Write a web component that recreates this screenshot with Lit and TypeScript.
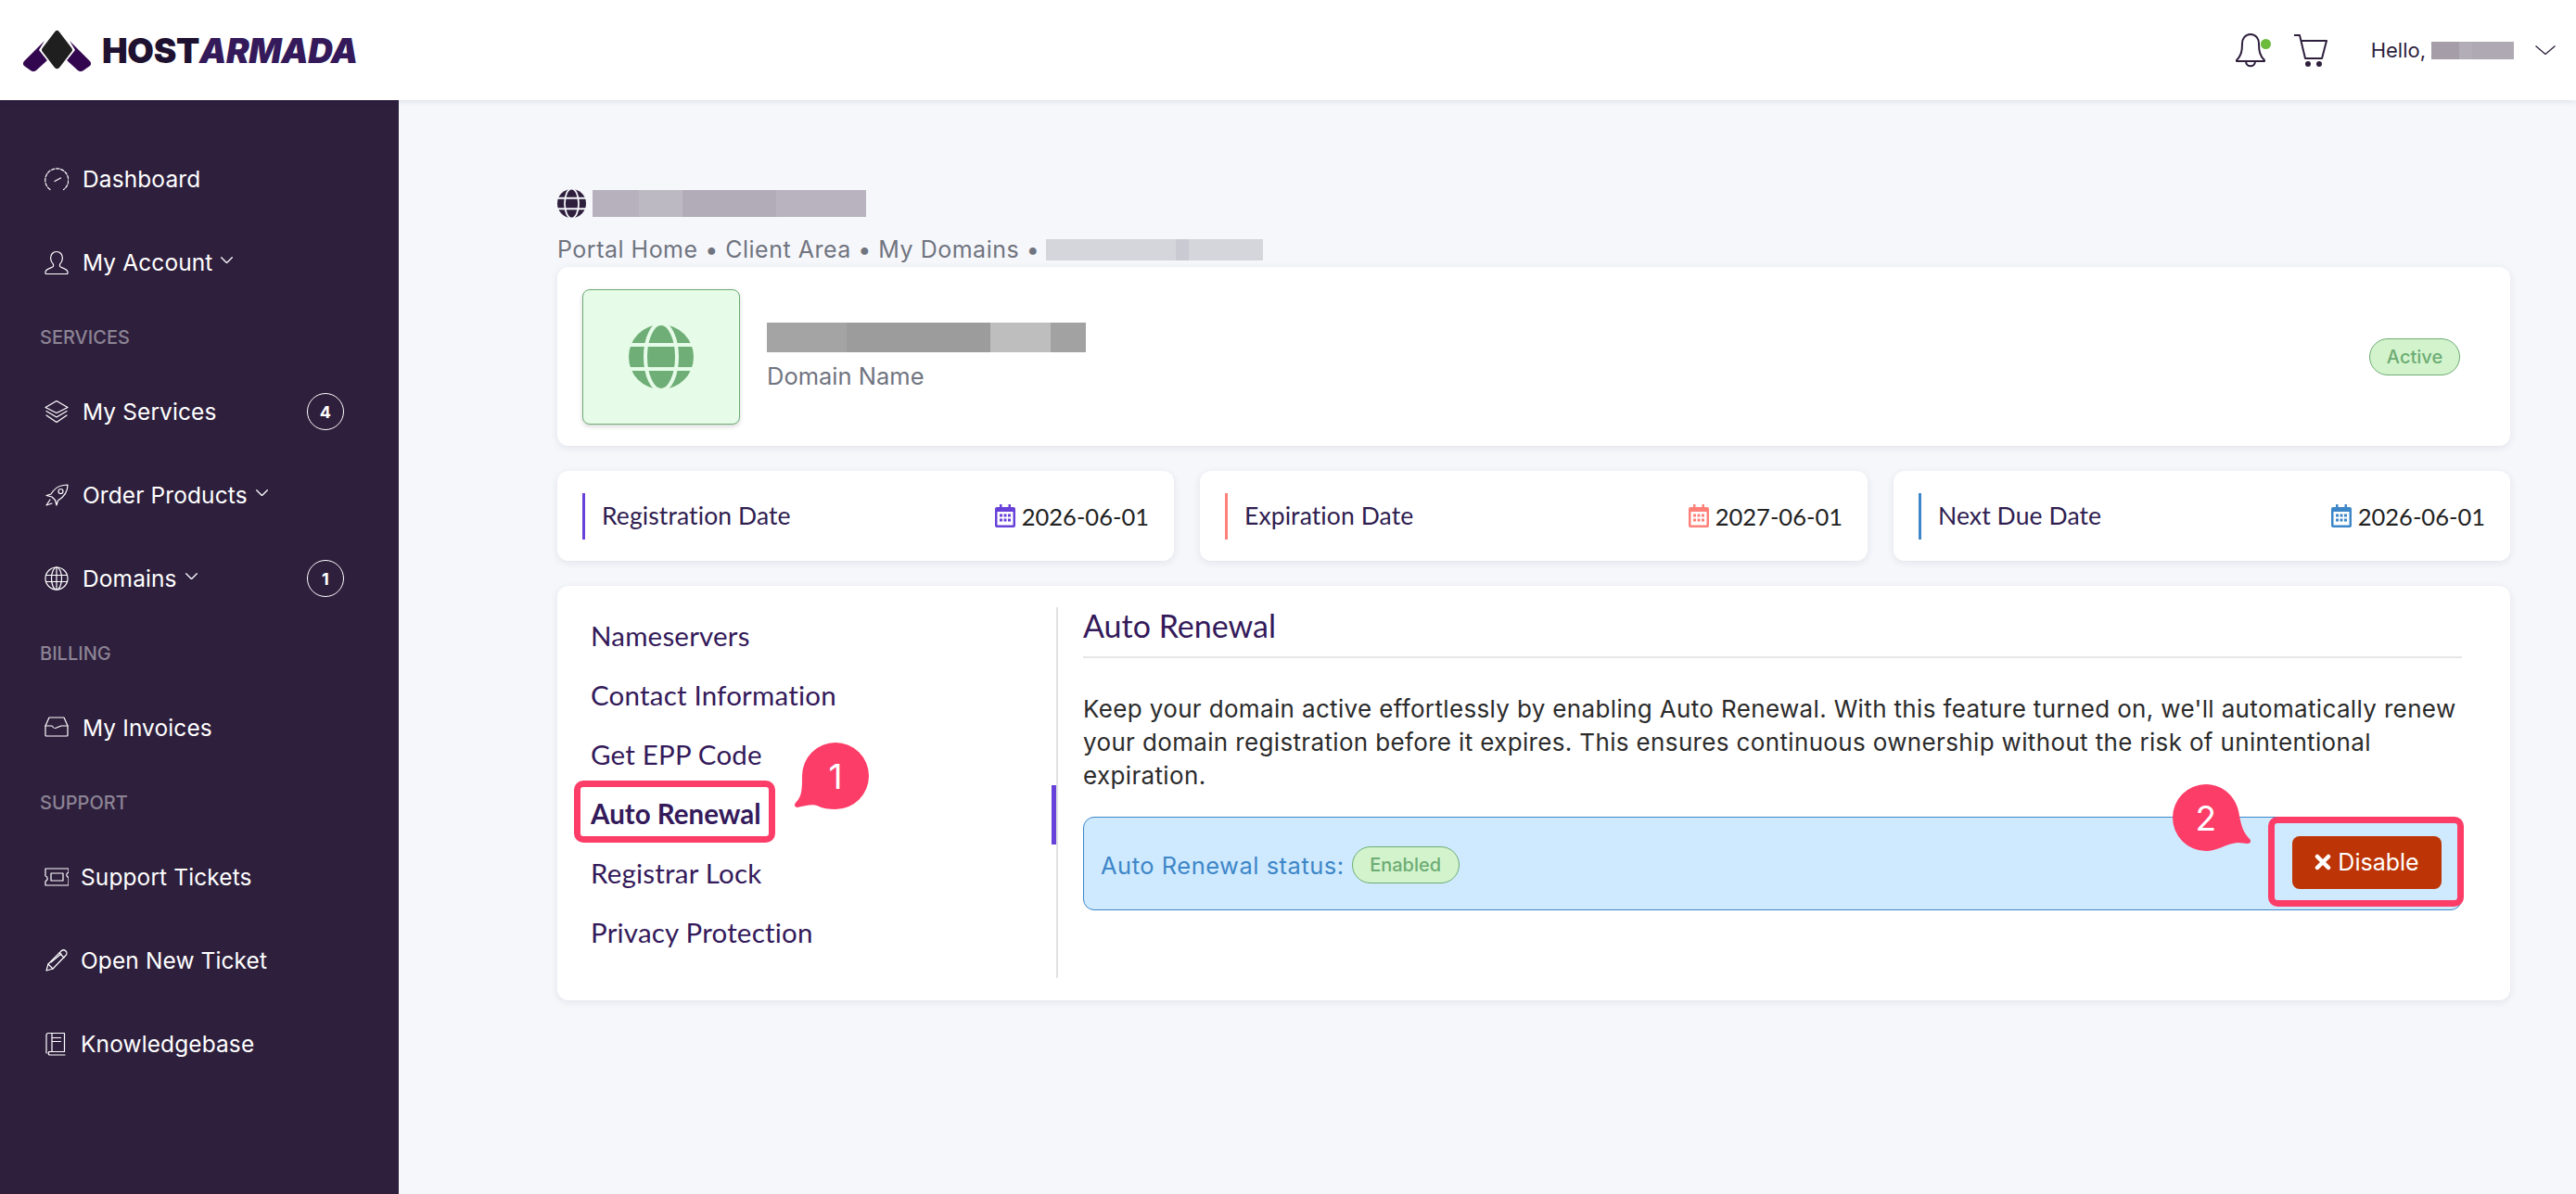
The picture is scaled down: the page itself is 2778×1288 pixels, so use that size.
import { LitElement, css, html, svg } from 'lit'
import { customElement } from 'lit/decorators.js'

const navIcons: Record<string, unknown> = {
  gauge: svg`<path d="M6 24.5a12.5 12.5 0 1 1 14.5 0" stroke-dasharray="3.5 1.6"/><path d="M11 15.5l6.5-3.5"/>`,
  user: svg`<path d="M13 1.500c-4 0-6.400 3-6.400 7 0 3 1.300 5 2.900 6.600v2.200c0 1.400-8.200 2.200-8.500 6v1.200c0 .6.400 1 1 1h22c.6 0 1-.4 1-1v-1.200c-.3-3.800-8.500-4.600-8.500-6v-2.200c1.600-1.600 2.900-3.600 2.900-6.600 0-4-2.400-7-6.400-7z"/>`,
  layers: svg`<path d="M13 1.500L25 8.500 13 14.500 1 8.500z"/><path d="M2 12.500L13 19 24 12.500"/><path d="M2 17L13 24.500 24 17"/>`,
  rocket: svg`<path d="M25 2c-7 0-12 2-15.500 6.500L7 12l-5 1.500 6 1.500 3.500 3.500 1.500 5.500 1.500-5c5-3 10.500-7.500 10.500-17z"/><circle cx="17.500" cy="9" r="2.500"/><path d="M6 18l-4 6 6-2"/>`,
  globe: svg`<circle cx="13" cy="13" r="12"/><ellipse cx="13" cy="13" rx="5.500" ry="12"/><path d="M13 1v24M1.500 9.500h23M1.500 16.500h23"/>`,
  inbox: svg`<path d="M5 2h16l4 9v10a1 1 0 0 1-1 1H2a1 1 0 0 1-1-1V11z"/><path d="M1 11h7c2 3 3 3 5 2s3-1 5-2h7"/>`,
  ticket: svg`<path d="M1 4h25v4c-3 1-3 4.500 0 5.500V22H1v-4.500c3-1 3-4.500 0-5.500z"/><path d="M7 9h13v8H7z"/>`,
  pencil: svg`<path d="M2 24l2-7L18 3c2-2 4-1 5 0s1.500 3 0 4.500L9 22z"/><path d="M4 17l5 5M16 5l5 5M7 15L18 6"/>`,
  book: svg`<path d="M4 1.500h17.500v20H5a2.500 2.500 0 0 0 0 3.500h17M4 1.500a2 2 0 0 0-2 2V23"/><path d="M9 6.500h8.500M9 10.500h8.500M8 2v19"/>`,
}

type NavItem = { label?: string; section?: string; icon?: string; caret?: boolean; count?: string; tight?: boolean }

const nav: NavItem[] = [
  { label: 'Dashboard', icon: 'gauge' },
  { label: 'My Account', icon: 'user', caret: true },
  { section: 'SERVICES' },
  { label: 'My Services', icon: 'layers', count: '4' },
  { label: 'Order Products', icon: 'rocket', caret: true },
  { label: 'Domains', icon: 'globe', caret: true, count: '1' },
  { section: 'BILLING' },
  { label: 'My Invoices', icon: 'inbox' },
  { section: 'SUPPORT' },
  { label: 'Support Tickets', icon: 'ticket', tight: true },
  { label: 'Open New Ticket', icon: 'pencil', tight: true },
  { label: 'Knowledgebase', icon: 'book', tight: true },
]

const dates = [
  { label: 'Registration Date', date: '2026-06-01', color: '#6741d9' },
  { label: 'Expiration Date', date: '2027-06-01', color: '#ff8078' },
  { label: 'Next Due Date', date: '2026-06-01', color: '#3d86c8' },
]

const tabs = ['Nameservers', 'Contact Information', 'Get EPP Code', 'Auto Renewal', 'Registrar Lock', 'Privacy Protection']

const solidGlobe = (size: number, color: string, gap: string) => html`
  <svg width=${size} height=${size} viewBox="0 0 70 70">
    <circle cx="35" cy="35" r="35" fill=${color}/>
    <ellipse cx="35" cy="35" rx="17" ry="36" fill="none" stroke=${gap} stroke-width="4"/>
    <path d="M0 22h70M0 48h70" stroke=${gap} stroke-width="4"/>
  </svg>`

const calendar = (color: string) => html`
  <svg class="cal" width="22" height="25" viewBox="0 0 22 25">
    <path d="M5 0h2.500v3h7V0H17v3h3a2 2 0 0 1 2 2v18a2 2 0 0 1-2 2H2a2 2 0 0 1-2-2V5a2 2 0 0 1 2-2h3z" fill=${color}/>
    <rect x="2.500" y="8" width="17" height="14.500" fill="#fff"/>
    <path d="M5 10.500h3v3H5zM9.500 10.500h3v3h-3zM14 10.500h3v3h-3zM5 15.500h3v3H5zM9.500 15.500h3v3h-3zM14 15.500h3v3h-3z" fill=${color}/>
  </svg>`

const chevron = (w: number, h: number, sw: number) => html`
  <svg width=${w} height=${h} viewBox="0 0 22 10" preserveAspectRatio="none" fill="none" stroke="currentColor" stroke-width=${sw}><path d="M.5.5L11 9.500 21.500.5"/></svg>`

@customElement('app-root')
export class AppRoot extends LitElement {
  static styles = css`
    :host {
      display: grid;
      grid-template-columns: 430px 1fr;
      grid-template-rows: 108px 1fr;
      height: 100vh;
      background: #f6f7fb;
      color: #2e1f3d;
      font-family: Inter, 'Liberation Sans', sans-serif;
      overflow: hidden;
    }
    header {
      grid-column: 1 / 3;
      display: flex;
      align-items: center;
      background: #fff;
      padding: 0 22px 0 25px;
      box-shadow: 0 2px 6px rgba(20, 20, 50, 0.09);
      z-index: 2;
    }
    .logo { display: flex; align-items: center; gap: 12px; }
    .wordmark {
      font-size: 37px;
      font-weight: 900;
      letter-spacing: -0.4px;
      color: #1f1230;
      line-height: 1;
    }
    .wordmark em { color: #341a5a; }
    .top-right { margin-left: auto; display: flex; align-items: center; }
    .bell { position: relative; display: flex; margin-right: 31px; }
    .dot {
      position: absolute;
      top: 6px;
      right: -6px;
      width: 11px;
      height: 11px;
      border-radius: 50%;
      background: #6cbb3c;
    }
    .hello { font-size: 22px; margin: 0 6px 0 47px; }
    .blur-user {
      width: 89px;
      height: 19px;
      margin-right: 23px;
      background: linear-gradient(90deg, #a59ea8 0 34%, #b3adb7 34% 50%, #afa9b3 50%);
    }
    aside {
      background: #2e1f3d;
      color: #fff;
      padding-top: 40px;
    }
    .row {
      display: flex;
      align-items: center;
      height: 90px;
      padding-left: 48px;
      padding-right: 59px;
      font-size: 24.5px;
      letter-spacing: 0.1px;
    }
    .row .ico { width: 26px; height: 26px; margin-right: 15px; flex: none; }
    .row.tight .ico { margin-right: 13px; }
    .row .caret { display: flex; margin: 0 0 5px 9px; }
    .count {
      margin-left: auto;
      width: 38px;
      height: 38px;
      border: 1px solid #fff;
      border-radius: 50%;
      display: grid;
      place-items: center;
      font-size: 18px;
      font-weight: 700;
    }
    .section {
      height: 71px;
      display: flex;
      align-items: center;
      padding-left: 43px;
      font-size: 20px;
      font-weight: 500;
      color: #8c8494;
    }
    main { padding: 96px 71px 0 171px; min-width: 0; }
    .title { display: flex; align-items: center; gap: 7px; height: 30px; }
    .blur-title {
      width: 295px;
      height: 29px;
      background: linear-gradient(90deg, #b6b1bc 0 17%, #bdb9c3 17% 33%, #b1acb7 33% 67%, #b8b3be 67%);
    }
    .crumbs {
      display: flex;
      align-items: center;
      gap: 7px;
      height: 28px;
      margin: 21px 0 5px;
      font-size: 25px;
      color: #70747f;
      letter-spacing: 0.5px;
    }
    .blur-crumb {
      width: 234px;
      height: 23px;
      background: linear-gradient(90deg, #d4d6dc 0 60%, #cacbd2 60% 66%, #d4d6dc 66%);
    }
    .card {
      background: #fff;
      border-radius: 12px;
      box-shadow: 0 2px 8px rgba(30, 30, 70, 0.09);
    }
    .domain {
      display: flex;
      align-items: center;
      height: 193px;
      padding: 0 54px 0 27px;
      margin-bottom: 27px;
    }
    .domain-icon {
      width: 170px;
      height: 146px;
      box-sizing: border-box;
      border: 1px solid #6dac73;
      border-radius: 8px;
      background: #e6fbe8;
      box-shadow: 0 2px 5px rgba(0, 0, 0, 0.16);
      display: grid;
      place-items: center;
      margin-right: 29px;
    }
    .blur-name {
      width: 344px;
      height: 32px;
      background: linear-gradient(90deg, #a4a4a4 0 25%, #9c9c9c 25% 70%, #bebebe 70% 89%, #a2a2a2 89%);
    }
    .domain-label { font-size: 25.5px; color: #70747f; line-height: 30px; margin-top: 11px; }
    .pill {
      box-sizing: border-box;
      display: inline-grid;
      place-items: center;
      height: 40px;
      border: 1px solid #6dac73;
      border-radius: 20px;
      background: #d3f3cd;
      color: #6dac73;
      font-size: 20px;
      font-weight: 500;
    }
    .pill.active { width: 98px; margin-left: auto; }
    .pill.enabled { width: 116px; margin-left: 8px; letter-spacing: 0; }
    .dates {
      display: grid;
      grid-template-columns: 665px 720px 1fr;
      gap: 28px;
      margin-bottom: 27px;
    }
    .date-card {
      display: flex;
      align-items: center;
      height: 97px;
      padding: 0 27px;
    }
    .accent { width: 3px; height: 50px; margin-right: 18px; }
    .date-label { font-family: Lato, sans-serif; font-size: 26.5px; letter-spacing: 0.1px; color: #2f2050; margin-top: -2px; }
    .date-value {
      margin-left: auto;
      display: flex;
      align-items: center;
      gap: 7px;
      font-family: Lato, sans-serif;
      font-size: 25.5px;
      color: #222;
    }
    .panel {
      display: grid;
      grid-template-columns: 540px 1fr;
      height: 447px;
      box-sizing: border-box;
      padding: 23px 52px 24px 0;
    }
    .tabs { border-right: 2px solid #e2e2e2; }
    .tab {
      position: relative;
      height: 64px;
      box-sizing: border-box;
      display: flex;
      align-items: center;
      padding: 0 0 3px 36px;
      font-family: Lato, sans-serif;
      font-size: 29.5px;
      letter-spacing: 0.2px;
      color: #341a5a;
    }
    .tab.current { font-weight: 700; letter-spacing: 0; }
    .tab.current::after {
      content: '';
      position: absolute;
      top: 0;
      right: 0;
      width: 5px;
      height: 64px;
      background: #6741d9;
    }
    .mark {
      position: absolute;
      box-sizing: border-box;
      border: 7px solid #fc3d68;
      border-radius: 10px;
    }
    .tab .mark { left: 18px; top: -5px; width: 217px; height: 67px; }
    .bubble {
      position: absolute;
      display: flex;
      z-index: 1;
    }
    .bubble span {
      position: absolute;
      top: 0;
      width: 72px;
      height: 72px;
      display: grid;
      place-items: center;
      color: #fff;
      font-family: Inter, sans-serif;
      font-weight: 400;
      font-size: 37px;
    }
    .tab .bubble { left: 256px; top: -46px; }
    .tab .bubble span { left: 8px; }
    .content { padding-left: 27px; min-width: 0; }
    h2 {
      margin: 0;
      font-family: Lato, sans-serif;
      font-weight: 400;
      font-size: 34px;
      line-height: 40px;
      color: #341a5a;
      padding-bottom: 13px;
      border-bottom: 2px solid #e6e6e6;
    }
    p {
      margin: 37px 0 26px;
      font-size: 26px;
      letter-spacing: 0.35px;
      line-height: 36px;
      color: #2b2b2b;
      white-space: nowrap;
    }
    .alert {
      position: relative;
      box-sizing: border-box;
      height: 101px;
      display: flex;
      align-items: center;
      padding: 3px 21px 0 18px;
      border: 1px solid #3d86c8;
      border-radius: 12px;
      background: #cfeafe;
      color: #3d86c8;
      font-size: 25.5px;
      letter-spacing: 0.5px;
    }
    .alert .bubble { left: 1174px; top: -36px; }
    .alert .bubble span { left: 0; }
    .btn-wrap { position: relative; margin: -6px 0 0 auto; }
    .btn-wrap .mark { left: -26px; top: -21px; width: 211px; height: 97px; }
    .btn {
      box-sizing: border-box;
      width: 161px;
      height: 57px;
      display: flex;
      align-items: center;
      justify-content: center;
      gap: 7px;
      border-radius: 8px;
      background: #bd3506;
      color: #fff;
      font-size: 25px;
      letter-spacing: 0;
    }
  `

  private renderNav(item: NavItem) {
    if (item.section) return html`<div class="section">${item.section}</div>`
    return html`
      <div class="row ${item.tight ? 'tight' : ''}">
        <svg class="ico" viewBox="0 0 26 26" fill="none" stroke="#fff" stroke-width="1.200" stroke-linejoin="round" stroke-linecap="round">${navIcons[item.icon!]}</svg>
        <span>${item.label}</span>
        ${item.caret ? html`<span class="caret">${chevron(13, 7, 2)}</span>` : ''}
        ${item.count ? html`<span class="count">${item.count}</span>` : ''}
      </div>`
  }

  render() {
    return html`
      <header>
        <div class="logo">
          <svg width="73" height="45" viewBox="0 0 73 45">
            <path d="M23 12L1 34c-1.500 2-1.500 3.500 0 5l7 5c2 1.500 4 1.500 6 0l12-11-9-11z" fill="#33074f"/>
            <path d="M50 12l22 22c1.500 2 1.500 3.500 0 5l-7 5c-2 1.500-4 1.500-6 0L47 33l9-11z" fill="#33074f"/>
            <path d="M36.500 0c1.500 0 2.500 1 3.500 2.500l13 17c1 1.500 1 3 0 4.500L40 41c-2 2.500-5 2.500-7 0L20 24c-1-1.500-1-3 0-4.500l13-17C34 1 35 0 36.500 0z" fill="#1f1f1f" stroke="#fff" stroke-width="1.500"/>
          </svg>
          <div class="wordmark">HOST<em>ARMADA</em></div>
        </div>
        <div class="top-right">
          <span class="bell">
            <svg width="32" height="37" viewBox="0 0 32 37" fill="none" stroke="#2e1f3d" stroke-width="2" stroke-linejoin="round">
              <path d="M16 1c-6 0-9 5-9 10 0 8-1 13-6 18v1h30v-1c-5-5-6-10-6-18 0-5-3-10-9-10z"/>
              <path d="M11 30c0 7 10 7 10 0"/>
            </svg>
            <i class="dot"></i>
          </span>
          <svg width="36" height="35" viewBox="0 0 36 35" fill="none" stroke="#2e1f3d" stroke-width="2" stroke-linejoin="round">
            <path d="M0 1h6l6 25h18l5-19H8"/>
            <circle cx="15" cy="32" r="2" fill="#2e1f3d"/><circle cx="27" cy="32" r="2" fill="#2e1f3d"/>
          </svg>
          <span class="hello">Hello,</span>
          <span class="blur-user"></span>
          ${chevron(22, 10, 1.3)}
        </div>
      </header>

      <aside>${nav.map((item) => this.renderNav(item))}</aside>

      <main>
        <div class="title">${solidGlobe(31, '#2e1f3d', '#f6f7fb')}<span class="blur-title"></span></div>
        <div class="crumbs">Portal Home • Client Area • My Domains •<span class="blur-crumb"></span></div>

        <section class="card domain">
          <div class="domain-icon">${solidGlobe(70, '#6fae76', '#e6fbe8')}</div>
          <div>
            <div class="blur-name"></div>
            <div class="domain-label">Domain Name</div>
          </div>
          <span class="pill active">Active</span>
        </section>

        <section class="dates">
          ${dates.map((d) => html`
            <div class="card date-card">
              <i class="accent" style="background:${d.color}"></i>
              <span class="date-label">${d.label}</span>
              <span class="date-value">${calendar(d.color)}${d.date}</span>
            </div>`)}
        </section>

        <section class="card panel">
          <div class="tabs">
            ${tabs.map((t) => t === 'Auto Renewal'
              ? html`<div class="tab current">${t}<i class="mark"></i>
                  <div class="bubble">
                    <svg width="80" height="72" viewBox="0 0 80 72"><path d="M8 36C8 50 8 58 1 65c-2 2-1 5 2 5 7-2 17-4 21-2 6 3 13 4 20 4a36 36 0 1 0-36-36z" fill="#fc3d68"/></svg>
                    <span>1</span>
                  </div></div>`
              : html`<div class="tab">${t}</div>`)}
          </div>
          <div class="content">
            <h2>Auto Renewal</h2>
            <p>Keep your domain active effortlessly by enabling Auto Renewal. With this feature turned on, we'll automatically renew<br>your domain registration before it expires. This ensures continuous ownership without the risk of unintentional<br>expiration.</p>
            <div class="alert">
              Auto Renewal status:<span class="pill enabled">Enabled</span>
              <div class="bubble">
                <svg width="85" height="72" viewBox="0 0 85 72"><path d="M36 0a36 36 0 0 0 0 72c12 0 22-8 34-9 4 0 8 1 11 1s4-3 2-5c-7-7-9-15-11-25C70 14 54 0 36 0z" fill="#fc3d68"/></svg>
                <span>2</span>
              </div>
              <div class="btn-wrap">
                <i class="mark"></i>
                <div class="btn">
                  <svg width="18" height="18" viewBox="0 0 18 18"><path d="M3 3l12 12M15 3L3 15" stroke="#fff" stroke-width="4.500" stroke-linecap="round"/></svg>
                  Disable
                </div>
              </div>
            </div>
          </div>
        </section>
      </main>
    `
  }
}
